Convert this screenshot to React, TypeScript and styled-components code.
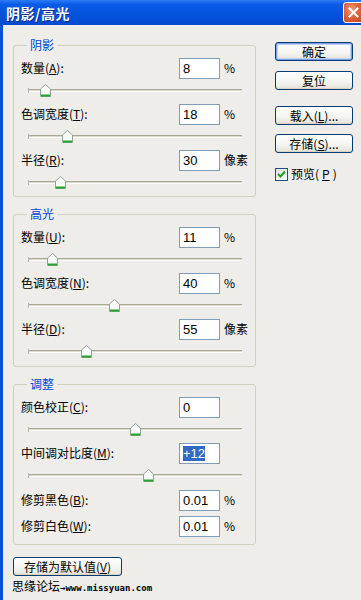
import styled, { createGlobalStyle } from 'styled-components';

const GlobalStyle = createGlobalStyle`
  html, body {
    margin: 0;
    padding: 0;
    background: #eeede9;
  }
  body {
    font-family: "Liberation Sans", "Noto Sans CJK SC", sans-serif;
    font-size: 12px;
    color: #000;
  }
`;

const Window = styled.div`
  width: 361px;
  height: 600px;
  overflow: hidden;
  background: #eeede9;
  display: flex;
  flex-direction: column;
`;

const TitleBar = styled.div`
  height: 25px;
  flex: none;
  display: flex;
  align-items: center;
  justify-content: space-between;
  padding-left: 6px;
  background: linear-gradient(#2c7cf6 0%, #0a5ae8 18%, #0453dd 60%, #0249cf 100%);
`;

const Title = styled.span`
  color: #fff;
  font-family: "Noto Sans CJK SC", sans-serif;
  font-weight: 700;
  font-size: 14px;
  letter-spacing: 0.5px;
  text-shadow: 1px 1px 0 #0a2a90;
`;

const CloseButton = styled.div`
  width: 21px;
  height: 21px;
  margin-right: -3px;
  box-sizing: border-box;
  border: 1px solid #fff;
  border-radius: 3px;
  background: radial-gradient(circle at 40% 35%, #f0a080 0%, #e0623a 45%, #c24418 100%);
  display: flex;
  align-items: center;
  justify-content: center;
`;

const Body = styled.div`
  flex: 1;
  display: flex;
  gap: 19px;
  border-left: 3px solid #0a4fd6;
  padding: 13px 8px 0 10px;
`;

const LeftColumn = styled.div`
  width: 243px;
  flex: none;
  display: flex;
  flex-direction: column;
  gap: 10px;
`;

const GroupBox = styled.fieldset<{ $bottom: number }>`
  margin: 0;
  padding: 0 5px ${(p) => p.$bottom}px 7px;
  border: 1px solid #d0d0bf;
  border-radius: 3px;
  min-width: 0;
`;

const Legend = styled.legend`
  color: #0046d5;
  font-family: "Noto Sans CJK SC", sans-serif;
  line-height: 14px;
  padding: 0 3px;
  margin-left: 6px;
`;

const Rows = styled.div`
  display: flex;
  flex-direction: column;
  padding-top: 5px;
`;

const FieldRow = styled.div<{ $gapTop: number }>`
  display: grid;
  grid-template-columns: 1fr 41px 26px;
  column-gap: 4px;
  align-items: center;
  height: 22px;
  margin-top: ${(p) => p.$gapTop}px;
`;

const Label = styled.span`
  font-family: "Noto Sans CJK SC", sans-serif;
  line-height: 14px;
  white-space: nowrap;
  u {
    text-underline-offset: 1px;
  }
`;

const Field = styled.div`
  height: 21px;
  box-sizing: border-box;
  border: 1px solid #7f9db9;
  background: #fff;
  padding: 0 3px;
  display: flex;
  align-items: center;
  font-size: 13px;
`;

const Selected = styled.span`
  background: #316ac5;
  color: #fff;
  line-height: 15px;
`;

const Unit = styled.span`
  font-family: "Noto Sans CJK SC", sans-serif;
  font-size: 12px;
  line-height: 14px;
  white-space: nowrap;
`;

const Slider = styled.div`
  position: relative;
  height: 24px;
  margin: 0 8px 0 7px;
  &::before {
    content: '';
    position: absolute;
    left: 0;
    right: 0;
    top: 10px;
    height: 1px;
    border-top: 1px solid #aaa796;
    border-bottom: 1px solid #fff;
    background: #dcdacb;
  }
  &::after {
    content: '';
    position: absolute;
    left: 0;
    top: 9px;
    width: 1px;
    height: 5px;
    background: #b8b5a6;
  }
`;

const Thumb = styled.svg`
  position: absolute;
  top: 5px;
`;

const RightColumn = styled.div`
  width: 78px;
  flex: none;
  display: flex;
  flex-direction: column;
  padding-top: 4px;
`;

const Button = styled.div<{ $gapTop?: number; $default?: boolean; $width?: number }>`
  height: 19px;
  width: ${(p) => (p.$width ? `${p.$width}px` : 'auto')};
  margin-top: ${(p) => p.$gapTop ?? 0}px;
  box-sizing: border-box;
  border: 1px solid #003c74;
  border-radius: 3px;
  background: linear-gradient(#ffffff 0%, #f3f3ef 60%, #e4e2d8 100%);
  box-shadow: ${(p) => (p.$default ? 'inset 0 0 0 1px #7d9ee8, inset 0 0 0 2px #c0d2f8' : 'inset 0 -1px 0 #d8d4c4')};
  display: flex;
  align-items: center;
  justify-content: center;
  font-family: "Noto Sans CJK SC", sans-serif;
  line-height: 14px;
  white-space: nowrap;
`;

const CheckRow = styled.div`
  display: flex;
  align-items: center;
  gap: 3px;
  margin-top: 14px;
  font-family: "Noto Sans CJK SC", sans-serif;
  line-height: 14px;
`;

const CheckBox = styled.div`
  width: 13px;
  height: 13px;
  box-sizing: border-box;
  border: 1px solid #1c5180;
  background: linear-gradient(135deg, #dcdcd7, #fff);
  display: flex;
  align-items: center;
  justify-content: center;
`;

const Footer = styled.div`
  display: flex;
  flex-direction: column;
  padding-top: 2px;
`;

const Watermark = styled.div`
  margin-top: 3px;
  display: flex;
  align-items: baseline;
  font-family: "Noto Sans CJK SC", sans-serif;
  line-height: 14px;
  white-space: nowrap;
  margin-left: -1px;
`;

const Url = styled.span`
  font-family: "DejaVu Sans Mono", monospace;
  font-size: 9px;
  font-weight: 700;
`;

type Item =
  | { kind: 'field'; label: string; key: string; value: string; unit?: string; selected?: boolean; gap?: number }
  | { kind: 'slider'; pos: number };

const groups: { title: string; bottom: number; items: Item[] }[] = [
  {
    title: '阴影',
    bottom: 1,
    items: [
      { kind: 'field', label: '数量(', key: 'A', value: '8', unit: '%' },
      { kind: 'slider', pos: 8 },
      { kind: 'field', label: '色调宽度(', key: 'T', value: '18', unit: '%' },
      { kind: 'slider', pos: 18 },
      { kind: 'field', label: '半径(', key: 'R', value: '30', unit: '像素' },
      { kind: 'slider', pos: 15 },
    ],
  },
  {
    title: '高光',
    bottom: 2,
    items: [
      { kind: 'field', label: '数量(', key: 'U', value: '11', unit: '%' },
      { kind: 'slider', pos: 11 },
      { kind: 'field', label: '色调宽度(', key: 'N', value: '40', unit: '%' },
      { kind: 'slider', pos: 40 },
      { kind: 'field', label: '半径(', key: 'D', value: '55', unit: '像素' },
      { kind: 'slider', pos: 27 },
    ],
  },
  {
    title: '调整',
    bottom: 7,
    items: [
      { kind: 'field', label: '颜色校正(', key: 'C', value: '0' },
      { kind: 'slider', pos: 50 },
      { kind: 'field', label: '中间调对比度(', key: 'M', value: '+12', selected: true },
      { kind: 'slider', pos: 56 },
      { kind: 'field', label: '修剪黑色(', key: 'B', value: '0.01', unit: '%', gap: 1 },
      { kind: 'field', label: '修剪白色(', key: 'W', value: '0.01', unit: '%', gap: 4 },
    ],
  },
];

const SliderThumb = ({ pos }: { pos: number }) => (
  <Slider>
    <Thumb width="11" height="13" viewBox="0 0 11 13" style={{ left: `calc(${pos}% - 5px)` }}>
      <polygon points="0.5,5 5.5,0.5 10.5,5 10.5,12.5 0.5,12.5" fill="#fbfcf9" stroke="#8fa39a" />
      <rect x="1" y="10.5" width="9" height="2" fill="#22a52a" />
    </Thumb>
  </Slider>
);

const App = () => {
  return (
    <>
      <GlobalStyle />
      <Window>
        <TitleBar>
          <Title>阴影/高光</Title>
          <CloseButton>
            <svg width="11" height="11" viewBox="0 0 11 11">
              <path d="M1.5 1.5 L9.5 9.5 M9.5 1.5 L1.5 9.5" stroke="#fff" strokeWidth="2" strokeLinecap="square" />
            </svg>
          </CloseButton>
        </TitleBar>
        <Body>
          <LeftColumn>
            {groups.map((g) => (
              <GroupBox key={g.title} $bottom={g.bottom}>
                <Legend>{g.title}</Legend>
                <Rows>
                  {g.items.map((it, idx) =>
                    it.kind === 'slider' ? (
                      <SliderThumb key={idx} pos={it.pos} />
                    ) : (
                      <FieldRow key={idx} $gapTop={it.gap ?? 0}>
                        <Label>
                          {it.label}
                          <u>{it.key}</u>):
                        </Label>
                        <Field>{it.selected ? <Selected>{it.value}</Selected> : it.value}</Field>
                        <Unit>{it.unit}</Unit>
                      </FieldRow>
                    ),
                  )}
                </Rows>
              </GroupBox>
            ))}
            <Footer>
              <Button $width={109}>
                存储为默认值(<u>V</u>)
              </Button>
              <Watermark>
                思缘论坛<Url>→www.missyuan.com</Url>
              </Watermark>
            </Footer>
          </LeftColumn>
          <RightColumn>
            <Button $default>确定</Button>
            <Button $gapTop={10}>复位</Button>
            <Button $gapTop={16}>
              载入(<u>L</u>)...
            </Button>
            <Button $gapTop={9}>
              存储(<u>S</u>)...
            </Button>
            <CheckRow>
              <CheckBox>
                <svg width="9" height="9" viewBox="0 0 9 9">
                  <path d="M1 4 L3.5 6.5 L8 1.5" stroke="#21a121" strokeWidth="2" fill="none" />
                </svg>
              </CheckBox>
              预览(<u>P</u>)
            </CheckRow>
          </RightColumn>
        </Body>
      </Window>
    </>
  );
};

export default App;
